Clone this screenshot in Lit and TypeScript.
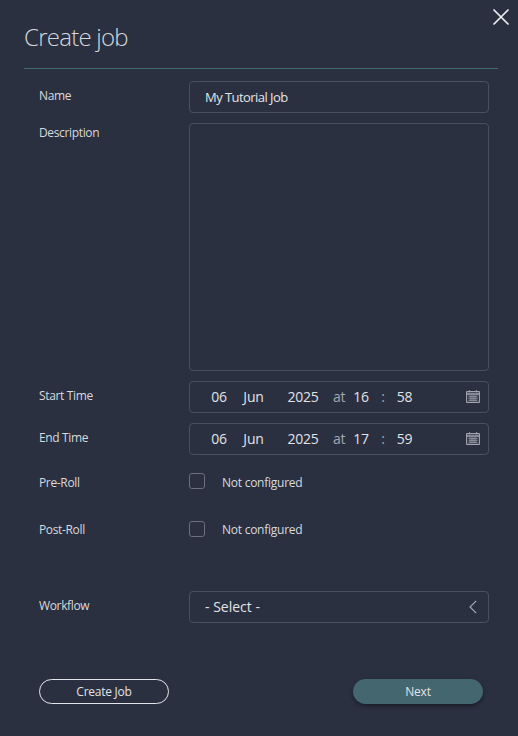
import { LitElement, html, css } from "lit";
import { customElement } from "lit/decorators.js";

const calendar = html`<svg class="cal" width="14" height="13" viewBox="0 0 14 13" fill="none" stroke="#a3a7af" stroke-width="1.1">
  <rect x="0.6" y="1.6" width="12.8" height="10.8" rx="0.5"></rect>
  <path d="M0.5 4H13.5" stroke-width="1.5"></path>
  <path d="M3.5 0.3V2.3M10.5 0.3V2.3"></path>
  <path d="M2.5 6.2H11.5M2.5 8.2H11.5M2.5 10.2H11.5" stroke-width="1"></path>
  <path d="M5 5.5V11M7 5.5V11M9 5.5V11" stroke-width="0.8" opacity="0.7"></path>
</svg>`;

@customElement("app-root")
export class AppRoot extends LitElement {
  static styles = css`
    :host {
      display: block;
      width: 518px;
      height: 736px;
      background: #2a3040;
      color: #d8dade;
      font-family: "Open Sans", "Noto Sans", sans-serif;
      font-size: 12px;
      box-sizing: border-box;
      position: relative;
      overflow: hidden;
    }
    .close {
      position: absolute;
      top: 8px;
      right: 8px;
      width: 18px;
      height: 18px;
    }
    .head {
      margin: 0 20px 0 24px;
      height: 69px;
      box-sizing: border-box;
      border-bottom: 1px solid #3f6a70;
    }
    h1 {
      margin: 0;
      padding-top: 21px;
      font-size: 24px;
      line-height: 32px;
      font-weight: 300;
      color: #d5d7db;
      letter-spacing: -0.75px;
    }
    .form {
      display: grid;
      grid-template-columns: 150px 300px;
      padding: 12px 0 0 39px;
      row-gap: 10px;
    }
    .label {
      font-size: 12px;
      line-height: 16px;
      padding-top: 7px;
      color: #d8dade;
      letter-spacing: -0.35px;
    }
    .label.desc {
      padding-top: 2px;
    }
    .box {
      box-sizing: border-box;
      border: 1px solid #4a5060;
      border-radius: 4px;
      height: 32px;
      display: flex;
      align-items: center;
      font-size: 13px;
      color: #e2e3e6;
    }
    .text {
      padding-left: 15px;
      letter-spacing: -0.55px;
    }
    .area {
      height: 248px;
    }
    .date {
      padding: 0 0 2px 14px;
      font-size: 14px;
      letter-spacing: -0.2px;
    }
    .date span {
      text-align: center;
      flex: none;
    }
    .date .dim {
      color: #a3a7af;
    }
    .w1 { width: 30px; }
    .w2 { width: 39px; }
    .w3 { width: 60px; }
    .w4 { width: 12px; }
    .w5 { width: 32px; }
    .w6 { width: 31px; }
    .cal {
      margin: 0 8px 0 auto;
    }
    .check-row {
      display: flex;
      align-items: center;
      height: 16px;
      gap: 17px;
      font-size: 12px;
      letter-spacing: -0.25px;
    }
    .pre .check-row span {
      padding-top: 2px;
    }
    .label.pre {
      margin-top: 8px;
      padding-top: 2px;
      height: 36px;
    }
    .label.post {
      padding-top: 1px;
      height: 59px;
    }
    .check-cell.pre {
      margin-top: 8px;
      height: 38px;
    }
    .check-cell.post {
      height: 60px;
    }
    .check-row i {
      display: block;
      box-sizing: border-box;
      width: 16px;
      height: 16px;
      border: 1px solid #6b707c;
      border-radius: 3px;
    }
    .select {
      padding: 0 11px 2px 15px;
      justify-content: space-between;
      font-size: 14px;
      letter-spacing: 0;
    }
    .select svg {
      margin-top: 2px;
    }
    .actions {
      display: flex;
      justify-content: space-between;
      align-items: flex-start;
      margin: 56px 35px 0 39px;
    }
    .btn {
      box-sizing: border-box;
      width: 130px;
      height: 25px;
      border-radius: 13px;
      display: flex;
      align-items: center;
      justify-content: center;
      font-size: 12px;
      letter-spacing: -0.25px;
      color: #e2e3e6;
    }
    .outline {
      border: 1px solid #e4e5e8;
    }
    .fill {
      background: #44666e;
      box-shadow: 0 2px 4px rgba(0, 0, 0, 0.4);
    }
  `;

  private dateField(a: string, b: string) {
    return html`<div class="box date">
      <span class="w1">06</span><span class="w2">Jun</span><span class="w3">2025</span>
      <span class="w4 dim">at</span><span class="w5">${a}</span><span class="w4 dim">:</span
      ><span class="w6">${b}</span>
      ${calendar}
    </div>`;
  }

  render() {
    return html`
      <svg class="close" viewBox="0 0 18 18" fill="none" stroke="#eceef0" stroke-width="1.7">
        <path d="M1.5 1.5L16.5 16.5M16.5 1.5L1.5 16.5"></path>
      </svg>
      <div class="head"><h1>Create job</h1></div>
      <div class="form">
        <div class="label">Name</div>
        <div class="box text">My Tutorial Job</div>
        <div class="label desc">Description</div>
        <div class="box area"></div>
        <div class="label">Start Time</div>
        ${this.dateField("16", "58")}
        <div class="label">End Time</div>
        ${this.dateField("17", "59")}
        <div class="label pre">Pre-Roll</div>
        <div class="check-cell pre"><div class="check-row"><i></i><span>Not configured</span></div></div>
        <div class="label post">Post-Roll</div>
        <div class="check-cell post"><div class="check-row"><i></i><span>Not configured</span></div></div>
        <div class="label">Workflow</div>
        <div class="box select">
          - Select -
          <svg width="8" height="14" viewBox="0 0 8 14" fill="none" stroke="#a3a7af" stroke-width="1.2">
            <path d="M7.2 0.8L1 7L7.2 13.2"></path>
          </svg>
        </div>
      </div>
      <div class="actions">
        <div class="btn outline">Create Job</div>
        <div class="btn fill">Next</div>
      </div>
    `;
  }
}
